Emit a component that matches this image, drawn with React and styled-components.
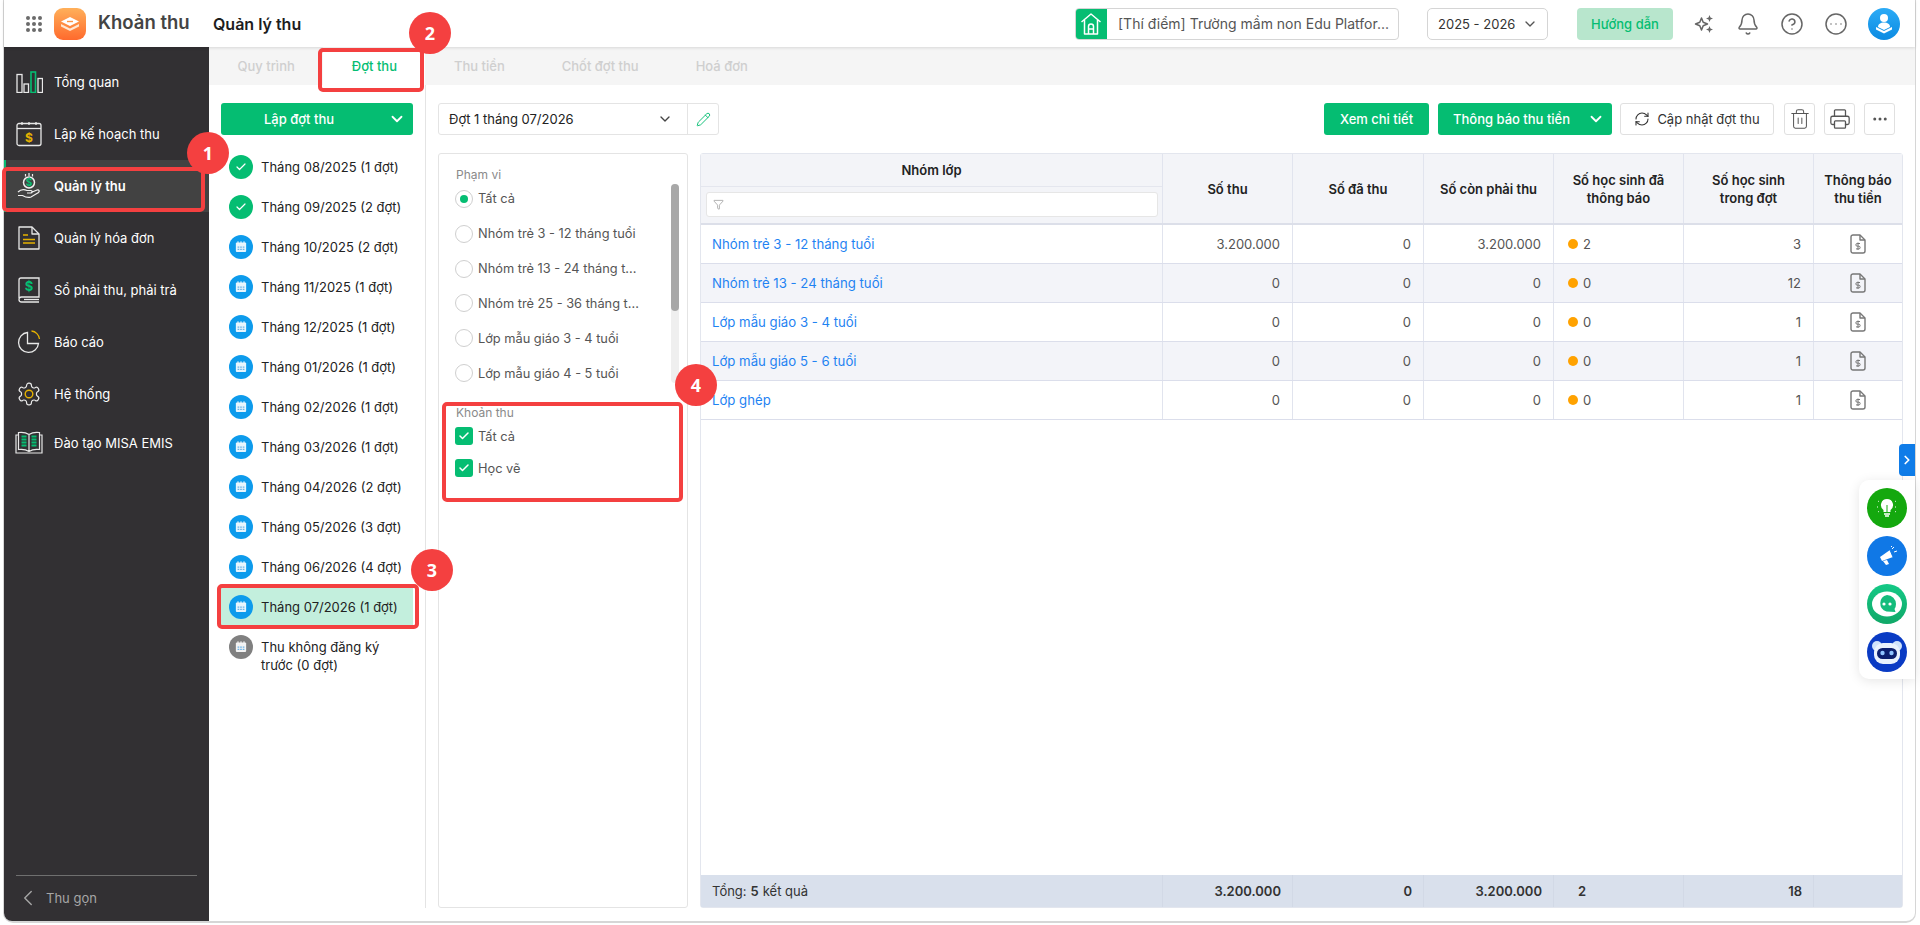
import React from "react";
import styled, { createGlobalStyle } from "styled-components";
import {
  Bell,
  Check,
  ChevronDown,
  ChevronLeft,
  ChevronRight,
  CircleEllipsis,
  CircleHelp,
  Ellipsis,
  Funnel,
  Pencil,
  Printer,
  RefreshCw,
  Trash2,
} from "lucide-react";

const GREEN = "#05bd72";
const RED = "#f44040";

const GlobalStyle = createGlobalStyle`
  html, body { margin: 0; padding: 0; background: #fff; overflow: hidden; }
  * { box-sizing: border-box; }
  body { font-family: Inter, "Noto Sans", sans-serif; font-size: 13px; color: #222; }
`;

const Frame = styled.div`
  position: relative;
  width: 1913px;
  height: 923px;
  margin-left: 3px;
  border: 1px solid #d6d6d6;
  border-width: 0 1px 2px 1px;
  border-radius: 0 0 10px 10px;
  display: flex;
  flex-direction: column;
`;

const Header = styled.header`
  height: 47px;
  flex: none;
  display: flex;
  align-items: center;
  padding: 0 15px 0 22px;
  position: relative;
  z-index: 2;
  box-shadow: 0 1px 3px rgba(0, 0, 0, 0.12);
  background: #fff;
`;

const AppGrid = styled.div`
  width: 16px;
  height: 16px;
  display: grid;
  grid-template-columns: repeat(3, 4px);
  grid-auto-rows: 4px;
  gap: 2px;
  margin-right: 12px;
  span {
    background: #6b6b6b;
    border-radius: 50%;
  }
`;

const AppTitle = styled.div`
  font-size: 18.5px;
  font-weight: 600;
  color: #444;
  margin-left: 12px;
  width: 115px;
  margin-top: -3px;
`;

const PageTitle = styled.div`
  font-size: 16px;
  font-weight: 600;
  color: #1d1d1d;
  flex: 1;
`;

const SchoolBox = styled.div`
  width: 324px;
  height: 32px;
  display: flex;
  align-items: center;
  border: 1px solid #d5d5d5;
  border-radius: 4px;
  overflow: hidden;
  margin-right: 28px;
`;

const SchoolIcon = styled.div`
  width: 32px;
  height: 32px;
  margin-left: -1px;
  background: ${GREEN};
  display: flex;
  align-items: center;
  justify-content: center;
`;

const SchoolName = styled.div`
  font-size: 14px;
  color: #555;
  margin-left: 11px;
  white-space: nowrap;
`;

const YearSelect = styled.div`
  width: 121px;
  height: 32px;
  border: 1px solid #d5d5d5;
  border-radius: 5px;
  display: flex;
  align-items: center;
  justify-content: space-between;
  padding: 0 9px 0 10px;
  font-size: 13px;
  color: #333;
  margin-right: 29px;
`;

const GuideButton = styled.div`
  width: 96px;
  height: 32px;
  background: #b8e6cd;
  border-radius: 4px;
  color: ${GREEN};
  font-weight: 500;
  display: flex;
  align-items: center;
  justify-content: center;
  margin-right: 22px;
`;

const HeaderIcons = styled.div`
  display: flex;
  align-items: center;
  gap: 22px;
  color: #666;
  svg {
    margin: 0 -1px;
  }
`;

const Avatar = styled.div`
  width: 32px;
  height: 32px;
  border-radius: 50%;
  background: linear-gradient(180deg, #2cabf6, #0c8be2);
  margin-left: 21px;
  flex: none;
  overflow: hidden;
`;

const Main = styled.div`
  flex: 1;
  min-height: 0;
  display: flex;
`;

const Sidebar = styled.nav`
  width: 205px;
  flex: none;
  background: #323033;
  display: flex;
  flex-direction: column;
  border-bottom-left-radius: 8px;
`;

const NavList = styled.div`
  flex: 1;
  padding-top: 9px;
`;

const NavItem = styled.div`
  height: ${(p) => p.$h || 52}px;
  display: flex;
  align-items: center;
  color: #fff;
  font-size: 13px;
  font-weight: ${(p) => (p.$active ? 600 : 400)};
  background: ${(p) => (p.$active ? "#424242" : "transparent")};
  box-shadow: ${(p) => (p.$active ? `inset 2px 0 0 ${GREEN}` : "none")};
`;

const NavIcon = styled.span`
  width: 50px;
  flex: none;
  display: flex;
  justify-content: center;
`;

const SidebarFoot = styled.div`
  margin: 0 12px;
  height: 46px;
  border-top: 1px solid #6f6f6f;
  display: flex;
  align-items: center;
  gap: 5px;
  padding-left: 0;
  padding-bottom: 2px;
  color: #a6a6a6;
  font-size: 13px;
  svg {
    margin-left: -1px;
  }
`;

const Content = styled.div`
  flex: 1;
  min-width: 0;
  display: flex;
  flex-direction: column;
`;

const Tabs = styled.div`
  height: 38px;
  flex: none;
  background: #f5f5f5;
  display: flex;
`;

const Tab = styled.div`
  padding: 0 28.5px;
  display: flex;
  align-items: center;
  font-weight: 500;
  font-size: 13px;
  color: ${(p) => (p.$active ? GREEN : "#cfcfcf")};
  background: ${(p) => (p.$active ? "#fff" : "transparent")};
`;

const Body = styled.div`
  flex: 1;
  min-height: 0;
  display: flex;
  padding-bottom: 13px;
`;

const ListCol = styled.div`
  width: 217px;
  flex: none;
  border-right: 1px solid #e4e4e4;
  padding: 18px 12px 0;
`;

const SplitButton = styled.div`
  height: 32px;
  background: ${GREEN};
  color: #fff;
  border-radius: 3px;
  font-weight: 500;
  display: flex;
  align-items: center;
  position: relative;
  justify-content: ${(p) => (p.$center ? "center" : "flex-start")};
  padding: ${(p) => (p.$center ? "0 36px 0 0" : "0 0 0 15px")};
  width: ${(p) => p.$w || 192}px;
  margin-left: ${(p) => p.$ml || 0}px;
  flex: none;
  svg {
    position: absolute;
    right: 7px;
    top: 7px;
  }
`;

const MonthList = styled.div`
  margin-top: 13px;
  display: flex;
  flex-direction: column;
  gap: 3px;
`;

const MonthItem = styled.div`
  min-height: 37px;
  display: flex;
  align-items: flex-start;
  gap: 8px;
  padding: 6.5px 8px;
  background: ${(p) => (p.$selected ? "#c3efdd" : "transparent")};
  font-size: 13px;
  line-height: 18px;
  color: #222;
`;

const MonthBadge = styled.span`
  width: 24px;
  height: 24px;
  border-radius: 50%;
  flex: none;
  background: ${(p) => p.$bg};
  display: flex;
  align-items: center;
  justify-content: center;
`;

const MonthLabel = styled.span`
  padding-top: 3px;
`;

const MainCol = styled.div`
  flex: 1;
  min-width: 0;
  display: flex;
  flex-direction: column;
  padding: 18px 12px 0;
`;

const Toolbar = styled.div`
  height: 32px;
  flex: none;
  display: flex;
  align-items: center;
  margin-bottom: 18px;
  padding-right: 8px;
`;

const BatchSelect = styled.div`
  width: 281px;
  height: 32px;
  border: 1px solid #e4e4e4;
  border-radius: 3px;
  display: flex;
  align-items: center;
  margin-right: auto;
`;

const BatchName = styled.div`
  flex: 1;
  padding-left: 10px;
  color: #222;
`;

const BatchCaret = styled.div`
  width: 30px;
  display: flex;
  color: #444;
`;

const BatchEdit = styled.div`
  width: 31px;
  height: 100%;
  border-left: 1px solid #e4e4e4;
  display: flex;
  align-items: center;
  justify-content: center;
  color: ${GREEN};
`;

const ActionButton = styled.div`
  height: 32px;
  width: ${(p) => p.$w}px;
  margin-left: ${(p) => p.$ml || 0}px;
  background: ${GREEN};
  color: #fff;
  border-radius: 3px;
  font-weight: 500;
  display: flex;
  align-items: center;
  justify-content: center;
`;

const OutlineButton = styled.div`
  height: 32px;
  width: ${(p) => p.$w}px;
  margin-left: ${(p) => p.$ml || 0}px;
  border: 1px solid #e0e0e0;
  border-radius: 3px;
  display: flex;
  align-items: center;
  justify-content: center;
  gap: 7px;
  color: #333;
  font-weight: 400;
  background: #fff;
`;

const Workspace = styled.div`
  flex: 1;
  min-height: 0;
  display: flex;
  gap: 12px;
`;

const FilterPanel = styled.aside`
  width: 250px;
  flex: none;
  border: 1px solid #e4e4e4;
  border-radius: 3px;
  padding-top: 12px;
`;

const SectionLabel = styled.div`
  height: 18px;
  line-height: 18px;
  font-size: 12px;
  color: #8a8a8a;
  padding-left: 17px;
  margin-top: ${(p) => p.$mt || 0}px;
`;

const ScrollArea = styled.div`
  height: 199px;
  display: flex;
  justify-content: space-between;
  padding-right: 8px;
`;

const OptionList = styled.div`
  padding: 5px 0 0 16px;
  display: flex;
  flex-direction: column;
  gap: ${(p) => p.$gap}px;
`;

const Option = styled.div`
  height: ${(p) => p.$h || 20}px;
  display: flex;
  align-items: center;
  gap: 5px;
  white-space: nowrap;
  color: #555;
  font-size: 12.8px;
`;

const Radio = styled.span`
  width: 18px;
  height: 18px;
  border-radius: 50%;
  border: 1px solid #cfcfcf;
  flex: none;
  display: flex;
  align-items: center;
  justify-content: center;
  &::after {
    content: "";
    width: 8px;
    height: 8px;
    border-radius: 50%;
    background: ${(p) => (p.$on ? GREEN : "transparent")};
  }
`;

const CheckBox = styled.span`
  width: 18px;
  height: 18px;
  border-radius: 3px;
  background: ${GREEN};
  flex: none;
  display: flex;
  align-items: center;
  justify-content: center;
  color: #fff;
`;

const ScrollTrack = styled.div`
  width: 8px;
  height: 100%;
  background: #efefef;
  border-radius: 4px;
`;

const ScrollThumb = styled.div`
  height: 127px;
  background: #a8a8a8;
  border-radius: 4px;
`;

const Table = styled.section`
  flex: 1;
  min-width: 0;
  display: flex;
  flex-direction: column;
  border: 1px solid #e3e6ee;
  border-radius: 3px;
`;

const COLS = "462px 130px 131px 130px 130px 130px 88px";

const HeadRow = styled.div`
  display: grid;
  grid-template-columns: ${COLS};
  height: 71px;
  flex: none;
  background: #f3f4f8;
  border-bottom: 2px solid #dcdfe9;
`;

const HeadCell = styled.div`
  display: flex;
  align-items: center;
  justify-content: center;
  text-align: center;
  font-weight: 600;
  font-size: 13px;
  line-height: 18px;
  color: #222;
  border-right: 1px solid #e1e4ee;
  &:last-child {
    border-right: none;
  }
`;

const GroupHead = styled.div`
  display: flex;
  flex-direction: column;
  border-right: 1px solid #e1e4ee;
`;

const GroupTitle = styled.div`
  height: 33px;
  display: flex;
  align-items: center;
  justify-content: center;
  font-weight: 600;
  font-size: 13px;
  color: #222;
  border-bottom: 1px solid #e4e6ee;
`;

const FilterInput = styled.div`
  height: 25px;
  margin: 5px 4px 0 5px;
  background: #fff;
  border: 1px solid #e6e6e6;
  border-radius: 3px;
  display: flex;
  align-items: center;
  padding-left: 6px;
  color: #888;
`;

const Row = styled.div`
  display: grid;
  grid-template-columns: ${COLS};
  height: 39px;
  flex: none;
  background: ${(p) => (p.$alt ? "#f3f4f9" : "#fff")};
  border-bottom: 1px solid #dbdeeb;
`;

const Cell = styled.div`
  display: flex;
  align-items: center;
  justify-content: ${(p) => p.$justify || "flex-end"};
  padding: 0 12px 0 11px;
  color: #555;
  font-size: 13px;
  border-right: 1px solid #e1e4ee;
  gap: 5px;
  &:last-child {
    border-right: none;
  }
`;

const GroupLink = styled.span`
  color: #1f83f2;
  font-size: 13.2px;
`;

const Dot = styled.span`
  width: 10px;
  height: 10px;
  border-radius: 50%;
  background: #ffa200;
  flex: none;
  margin-left: 3px;
`;

const TableFill = styled.div`
  flex: 1;
`;

const FootRow = styled.div`
  display: grid;
  grid-template-columns: ${COLS};
  height: 32px;
  flex: none;
  background: #d9e0ec;
`;

const FootCell = styled.div`
  display: flex;
  align-items: center;
  justify-content: ${(p) => p.$justify || "flex-end"};
  padding: 0 11px;
  font-size: 13px;
  font-weight: ${(p) => (p.$plain ? 400 : 600)};
  color: #333;
  border-right: 1px solid #d2d9e6;
  b {
    font-weight: 600;
    margin: 0 4px;
  }
  &:last-child {
    border-right: none;
  }
`;

const FootCount = styled.span`
  padding-left: 13px;
`;

const NoticeTab = styled.div`
  position: absolute;
  right: 0;
  top: 444px;
  width: 16px;
  height: 32px;
  background: #0f7ce8;
  border-radius: 4px 0 0 4px;
  color: #fff;
  display: flex;
  align-items: center;
  justify-content: center;
`;

const FloatDock = styled.div`
  position: absolute;
  right: 0;
  top: 480px;
  width: 56px;
  height: 199px;
  padding: 8px 0 0 8px;
  background: #fff;
  border-radius: 10px 0 0 10px;
  box-shadow: 0 2px 12px rgba(0, 0, 0, 0.1);
  display: flex;
  flex-direction: column;
  gap: 8px;
`;

const Marker = styled.div`
  position: absolute;
  left: ${(p) => p.$x - 4}px;
  top: ${(p) => p.$y}px;
  width: ${(p) => p.$w}px;
  height: ${(p) => p.$h}px;
  border: 4px solid ${RED};
  border-radius: 5px;
  z-index: 5;
  pointer-events: none;
`;

const StepBadge = styled.div`
  position: absolute;
  left: ${(p) => p.$x - 4 - 21}px;
  top: ${(p) => p.$y - 21}px;
  width: 42px;
  height: 42px;
  border-radius: 50%;
  background: ${RED};
  color: #fff;
  font-family: "Noto Sans", sans-serif;
  font-weight: 700;
  font-size: 18px;
  display: flex;
  align-items: center;
  justify-content: center;
  z-index: 6;
`;

const GridIcon = () => (
  <AppGrid>
    {Array.from({ length: 9 }).map((_, i) => (
      <span key={i} />
    ))}
  </AppGrid>
);

const LogoIcon = () => (
  <svg width="32" height="32" viewBox="0 0 32 32">
    <defs>
      <linearGradient id="logoBg" x1="0" y1="0" x2="0" y2="1">
        <stop offset="0" stopColor="#ffb05a" />
        <stop offset="1" stopColor="#ff6a2d" />
      </linearGradient>
    </defs>
    <rect width="32" height="32" rx="9" fill="url(#logoBg)" />
    <path d="M16 9l9 4.500-9 4.500-9-4.500z" fill="#fff" />
    <path d="M7 16l9 4.500 9-4.500v2.500l-9 4.500-9-4.500z" fill="#ffe7d2" />
    <path d="M13 13.500h6" stroke="#ff9445" strokeWidth="1.400" />
  </svg>
);

const HouseIcon = () => (
  <svg width="22" height="24" viewBox="0 0 22 24" fill="none" stroke="#fff" strokeWidth="1.500" strokeLinejoin="round">
    <path d="M1.500 10L11 2l9.500 8" />
    <path d="M4.500 8v14h13V8" />
    <path d="M8.500 22v-7.500a2.500 2.500 0 0 1 5 0V22" />
    <path d="M8.500 17h5" />
  </svg>
);

const SparkIcon = () => (
  <svg width="22" height="22" viewBox="0 0 22 22" fill="#666">
    <path d="M7.500 5l1.700 4.300L13.500 11l-4.300 1.700L7.500 17l-1.700-4.300L1.500 11l4.300-1.700z" fill="none" stroke="#666" strokeWidth="1.500" strokeLinejoin="round" />
    <path d="M15.500 2l1 2.500 2.500 1-2.500 1-1 2.500-1-2.500-2.500-1 2.500-1z" />
    <path d="M15.500 13l1 2.500 2.500 1-2.500 1-1 2.500-1-2.500-2.500-1 2.500-1z" />
  </svg>
);

const AvatarIcon = () => (
  <svg width="32" height="32" viewBox="0 0 32 32">
    <circle cx="16" cy="10" r="4" fill="#fff" />
    <path d="M10 19c0-3 2.500-4.500 6-4.500s6 1.500 6 4.500l-6 3z" fill="#fff" />
    <path d="M8 19l8 4 8-4v2.500l-8 4-8-4z" fill="#fff" />
  </svg>
);

const ChartNav = () => (
  <svg width="27" height="22" viewBox="0 0 27 22" fill="none" stroke="#e8e8e8" strokeWidth="1.300">
    <rect x="1" y="3.500" width="5" height="18" />
    <rect x="8" y="13" width="4.500" height="8.500" />
    <rect x="15" y="1" width="4.500" height="20.500" stroke={GREEN} strokeWidth="1.600" />
    <rect x="22" y="7.500" width="4.500" height="14" />
  </svg>
);

const PlanNav = () => (
  <svg width="26" height="26" viewBox="0 0 26 26" fill="none" stroke="#e8e8e8" strokeWidth="1.300">
    <rect x="1" y="2.500" width="24" height="22" rx="2" />
    <path d="M1 7.500h24" />
    <path d="M6 1v3M13 1v3M20 1v3" />
    <text x="13" y="21" textAnchor="middle" fontSize="12" fontWeight="700" fill="#e5b100" stroke="none" fontFamily="Inter, sans-serif">$</text>
  </svg>
);

const CollectNav = () => (
  <svg width="24" height="28" viewBox="0 0 24 28" fill="none" stroke="#f0f0f0" strokeWidth="1.200">
    <path d="M12 1v3M8.500 2v2.500M15.500 2v2.500" />
    <circle cx="12" cy="10.500" r="5.500" strokeWidth="1.500" />
    <text x="12" y="14" textAnchor="middle" fontSize="10" fontWeight="700" fill={GREEN} stroke="none" fontFamily="Inter, sans-serif">$</text>
    <path d="M1 20c3-3 6-3 9-1.500h4c1.500 0 1.500 2.500 0 2.500h-4M14 20.500l6-2.500c2-.5 3 1 1.500 2.500L14 25c-2.500 1-6 0-8.500-1.500H1" />
  </svg>
);

const InvoiceNav = () => (
  <svg width="22" height="24" viewBox="0 0 22 24" fill="none" stroke="#e8e8e8" strokeWidth="1.300" strokeLinejoin="round">
    <path d="M1 1h13l7 7v15H1z" />
    <path d="M14 1v7h7" />
    <path d="M5 9h5M5 13.500h12M5 17h12" stroke="#e5b100" strokeWidth="1.600" />
  </svg>
);

const LedgerNav = () => (
  <svg width="22" height="26" viewBox="0 0 22 26" fill="none" stroke="#e8e8e8" strokeWidth="1.300">
    <path d="M1 21V3a2 2 0 0 1 2-2h18v19H3.500a2.500 2.500 0 0 0 0 5H21" />
    <path d="M6 22.500h15" />
    <text x="11" y="14" textAnchor="middle" fontSize="13" fontWeight="700" fill={GREEN} stroke="none" fontFamily="Inter, sans-serif">$</text>
  </svg>
);

const ReportNav = () => (
  <svg width="24" height="24" viewBox="0 0 24 24" fill="none" stroke="#e8e8e8" strokeWidth="1.300">
    <path d="M10.500 2.500A10 10 0 1 0 21.500 13.500H10.500z" />
    <path d="M14.500 1a9 9 0 0 1 8 8" stroke="#e5b100" />
  </svg>
);

const GearNav = () => (
  <svg width="26" height="26" viewBox="0 0 24 24" fill="none" stroke="#e8e8e8" strokeWidth="1.100">
    <path d="M12.220 2h-.440a2 2 0 0 0-2 2v.180a2 2 0 0 1-1 1.730l-.430.250a2 2 0 0 1-2 0l-.150-.080a2 2 0 0 0-2.730.730l-.220.380a2 2 0 0 0 .730 2.730l.150.100a2 2 0 0 1 1 1.720v.510a2 2 0 0 1-1 1.740l-.150.090a2 2 0 0 0-.730 2.730l.220.380a2 2 0 0 0 2.730.730l.150-.080a2 2 0 0 1 2 0l.430.250a2 2 0 0 1 1 1.730V20a2 2 0 0 0 2 2h.440a2 2 0 0 0 2-2v-.180a2 2 0 0 1 1-1.730l.430-.250a2 2 0 0 1 2 0l.150.080a2 2 0 0 0 2.730-.730l.220-.390a2 2 0 0 0-.730-2.730l-.150-.080a2 2 0 0 1-1-1.740v-.500a2 2 0 0 1 1-1.740l.150-.090a2 2 0 0 0 .730-2.730l-.220-.380a2 2 0 0 0-2.730-.730l-.150.080a2 2 0 0 1-2 0l-.430-.250a2 2 0 0 1-1-1.730V4a2 2 0 0 0-2-2z" />
    <circle cx="12" cy="12" r="3.500" stroke="#e5b100" strokeWidth="1.300" />
  </svg>
);

const BookNav = () => (
  <svg width="28" height="24" viewBox="0 0 28 24" fill="none" stroke="#e8e8e8" strokeWidth="1.200">
    <path d="M14 3.500C11 1.500 7 1 3.500 1.500v17c3.500-.5 7.500 0 10.500 2 3-2 7-2.500 10.500-2v-17C21 1 17 1.500 14 3.500zM14 3.500v17" />
    <path d="M3.500 4H1v18h26V4h-2.500" />
    <path d="M6.500 5.500h5M6.500 8.500h5M6.500 11.500h5M6.500 14.500h5M16.500 5.500h5M16.500 8.500h5M16.500 11.500h5M16.500 14.500h5" stroke={GREEN} strokeWidth="1.800" />
  </svg>
);

const CalendarMini = () => (
  <svg width="12" height="12" viewBox="0 0 14 14">
    <path d="M3.500 0.300v2.500M7 0.300v2.500M10.500 0.300v2.500" stroke="#fff" strokeWidth="1.100" />
    <rect x="1" y="1.800" width="12" height="11" rx="1.200" fill="#fff" opacity="0.9" />
    <path d="M3 6.500h2v1.500H3zM6 6.500h2v1.500H6zM9 6.500h2v1.500H9zM3 9h2v1.500H3zM6 9h2v1.500H6zM9 9h2v1.500H9z" fill="#6db4e8" />
  </svg>
);

const FileMoneyIcon = () => (
  <svg width="16" height="20" viewBox="0 0 16 20" fill="none" stroke="#777" strokeWidth="1.400" strokeLinejoin="round">
    <path d="M1 3a2 2 0 0 1 2-2h7l5 5v11a2 2 0 0 1-2 2H3a2 2 0 0 1-2-2z" />
    <path d="M10 1v5h5" />
    <path d="M10 9.500H7.200a1.300 1.300 0 0 0 0 2.700h1.600a1.300 1.300 0 0 1 0 2.700H6M8 8.500v7.500" strokeWidth="1" />
  </svg>
);

const BulbCircle = () => (
  <svg width="40" height="40" viewBox="0 0 40 40">
    <circle cx="20" cy="20" r="20" fill="#14a80e" />
    <path d="M20 11a6 6 0 0 0-3.500 10.900V24h7v-2.100A6 6 0 0 0 20 11z" fill="#fff" />
    <path d="M17 26h6M18 28h4" stroke="#fff" strokeWidth="1.300" />
    <path d="M20 17v7" stroke="#14a80e" strokeWidth="1" />
    <path d="M11 13l1.500 1M29 13l-1.500 1M10 19h2M28 19h2M11 24l1.500-1M29 24l-1.500-1" stroke="#fff" strokeWidth="1" strokeDasharray="1 1" />
  </svg>
);

const MegaphoneCircle = () => (
  <svg width="40" height="40" viewBox="0 0 40 40">
    <circle cx="20" cy="20" r="20" fill="#1078e6" />
    <path d="M13 21l10-7 3 7-11 4z" fill="#fff" />
    <path d="M23 14l3 7" stroke="#1078e6" strokeWidth="1" />
    <path d="M16 25l4-1 2 4-3 1z" fill="#fff" />
    <path d="M25 13l2-2M27 16l3-1M24 11l1-1" stroke="#fff" strokeWidth="1" />
  </svg>
);

const ChatCircle = () => (
  <svg width="40" height="40" viewBox="0 0 40 40">
    <defs>
      <linearGradient id="chatBg" x1="0" y1="0" x2="0" y2="1">
        <stop offset="0" stopColor="#14c986" />
        <stop offset="1" stopColor="#11a868" />
      </linearGradient>
    </defs>
    <circle cx="20" cy="20" r="20" fill="url(#chatBg)" />
    <ellipse cx="20" cy="20" rx="15" ry="12.500" fill="#fff" />
    <path d="M20 11a9 9 0 0 1 9 9 8.500 8.500 0 0 1-1.500 5l1 3-9-.500a8.500 8.500 0 0 1 .500-16.500z" fill="#14bc7c" />
    <circle cx="17" cy="20" r="1.600" fill="#fff" />
    <circle cx="23" cy="20" r="1.600" fill="#fff" />
  </svg>
);

const RobotCircle = () => (
  <svg width="40" height="40" viewBox="0 0 40 40">
    <circle cx="20" cy="20" r="20" fill="#0a3bc4" />
    <circle cx="10" cy="14" r="5" fill="#cfe3fb" />
    <circle cx="30" cy="14" r="5" fill="#cfe3fb" />
    <rect x="7" y="11" width="26" height="21" rx="9" fill="#e9f2fd" />
    <rect x="10" y="16" width="20" height="11" rx="5.500" fill="#0b1f6e" />
    <circle cx="15.500" cy="21" r="2.200" fill="#8fc4ff" />
    <circle cx="24.500" cy="21" r="2.200" fill="#8fc4ff" />
  </svg>
);

const NAV = [
  { label: "Tổng quan", icon: <ChartNav /> },
  { label: "Lập kế hoạch thu", icon: <PlanNav /> },
  { label: "Quản lý thu", icon: <CollectNav />, active: true },
  { label: "Quản lý hóa đơn", icon: <InvoiceNav /> },
  { label: "Sổ phải thu, phải trả", icon: <LedgerNav /> },
  { label: "Báo cáo", icon: <ReportNav /> },
  { label: "Hệ thống", icon: <GearNav /> },
  { label: "Đào tạo MISA EMIS", icon: <BookNav />, h: 46 },
];

const MONTHS = [
  { label: "Tháng 08/2025 (1 đợt)", done: true },
  { label: "Tháng 09/2025 (2 đợt)", done: true },
  { label: "Tháng 10/2025 (2 đợt)" },
  { label: "Tháng 11/2025 (1 đợt)" },
  { label: "Tháng 12/2025 (1 đợt)" },
  { label: "Tháng 01/2026 (1 đợt)" },
  { label: "Tháng 02/2026 (1 đợt)" },
  { label: "Tháng 03/2026 (1 đợt)" },
  { label: "Tháng 04/2026 (2 đợt)" },
  { label: "Tháng 05/2026 (3 đợt)" },
  { label: "Tháng 06/2026 (4 đợt)" },
  { label: "Tháng 07/2026 (1 đợt)", selected: true },
  { label: "Thu không đăng ký trước (0 đợt)", gray: true },
];

const SCOPES = [
  "Tất cả",
  "Nhóm trẻ 3 - 12 tháng tuổi",
  "Nhóm trẻ 13 - 24 tháng t...",
  "Nhóm trẻ 25 - 36 tháng t...",
  "Lớp mẫu giáo 3 - 4 tuổi",
  "Lớp mẫu giáo 4 - 5 tuổi",
];

const ROWS = [
  { name: "Nhóm trẻ 3 - 12 tháng tuổi", total: "3.200.000", paid: "0", left: "3.200.000", sent: "2", count: "3" },
  { name: "Nhóm trẻ 13 - 24 tháng tuổi", total: "0", paid: "0", left: "0", sent: "0", count: "12" },
  { name: "Lớp mẫu giáo 3 - 4 tuổi", total: "0", paid: "0", left: "0", sent: "0", count: "1" },
  { name: "Lớp mẫu giáo 5 - 6 tuổi", total: "0", paid: "0", left: "0", sent: "0", count: "1" },
  { name: "Lớp ghép", total: "0", paid: "0", left: "0", sent: "0", count: "1" },
];

export default function App() {
  return (
    <>
      <GlobalStyle />
      <Frame>
        <Header>
          <GridIcon />
          <LogoIcon />
          <AppTitle>Khoản thu</AppTitle>
          <PageTitle>Quản lý thu</PageTitle>
          <SchoolBox>
            <SchoolIcon>
              <HouseIcon />
            </SchoolIcon>
            <SchoolName>[Thí điểm] Trường mầm non Edu Platfor...</SchoolName>
          </SchoolBox>
          <YearSelect>
            2025 - 2026
            <ChevronDown size={16} color="#555" />
          </YearSelect>
          <GuideButton>Hướng dẫn</GuideButton>
          <HeaderIcons>
            <SparkIcon />
            <Bell size={24} strokeWidth={1.5} />
            <CircleHelp size={24} strokeWidth={1.5} />
            <CircleEllipsis size={24} strokeWidth={1.5} />
          </HeaderIcons>
          <Avatar>
            <AvatarIcon />
          </Avatar>
        </Header>

        <Main>
          <Sidebar>
            <NavList>
              {NAV.map((item) => (
                <NavItem key={item.label} $active={item.active} $h={item.h}>
                  <NavIcon>{item.icon}</NavIcon>
                  {item.label}
                </NavItem>
              ))}
            </NavList>
            <SidebarFoot>
              <ChevronLeft size={26} strokeWidth={1.3} />
              Thu gọn
            </SidebarFoot>
          </Sidebar>

          <Content>
            <Tabs>
              <Tab>Quy trình</Tab>
              <Tab $active>Đợt thu</Tab>
              <Tab>Thu tiền</Tab>
              <Tab>Chốt đợt thu</Tab>
              <Tab>Hoá đơn</Tab>
            </Tabs>

            <Body>
              <ListCol>
                <SplitButton $center>
                  Lập đợt thu
                  <ChevronDown size={18} strokeWidth={2.4} />
                </SplitButton>
                <MonthList>
                  {MONTHS.map((m) => (
                    <MonthItem key={m.label} $selected={m.selected}>
                      <MonthBadge $bg={m.done ? GREEN : m.gray ? "#808080" : "#0d9bec"}>
                        {m.done ? <Check size={12} color="#fff" strokeWidth={2.4} /> : <CalendarMini />}
                      </MonthBadge>
                      <MonthLabel>{m.label}</MonthLabel>
                    </MonthItem>
                  ))}
                </MonthList>
              </ListCol>

              <MainCol>
                <Toolbar>
                  <BatchSelect>
                    <BatchName>Đợt 1 tháng 07/2026</BatchName>
                    <BatchCaret>
                      <ChevronDown size={16} />
                    </BatchCaret>
                    <BatchEdit>
                      <Pencil size={15} strokeWidth={1.5} />
                    </BatchEdit>
                  </BatchSelect>
                  <ActionButton $w={105}>Xem chi tiết</ActionButton>
                  <SplitButton $w={174} $ml={9}>
                    Thông báo thu tiền
                    <ChevronDown size={18} strokeWidth={2.4} />
                  </SplitButton>
                  <OutlineButton $w={154} $ml={8}>
                    <RefreshCw size={16} strokeWidth={1.6} />
                    Cập nhật đợt thu
                  </OutlineButton>
                  <OutlineButton $w={31} $ml={10}>
                    <Trash2 size={22} strokeWidth={1.1} color="#555" />
                  </OutlineButton>
                  <OutlineButton $w={31} $ml={9}>
                    <Printer size={22} strokeWidth={1.4} color="#555" />
                  </OutlineButton>
                  <OutlineButton $w={31} $ml={9}>
                    <Ellipsis size={18} color="#555" />
                  </OutlineButton>
                </Toolbar>

                <Workspace>
                  <FilterPanel>
                    <SectionLabel>Phạm vi</SectionLabel>
                    <ScrollArea>
                      <OptionList $gap={15}>
                        {SCOPES.map((s, i) => (
                          <Option key={s}>
                            <Radio $on={i === 0} />
                            {s}
                          </Option>
                        ))}
                      </OptionList>
                      <ScrollTrack>
                        <ScrollThumb />
                      </ScrollTrack>
                    </ScrollArea>
                    <SectionLabel $mt={21}>Khoản thu</SectionLabel>
                    <OptionList $gap={14}>
                      <Option $h={18}>
                        <CheckBox>
                          <Check size={12} strokeWidth={3} />
                        </CheckBox>
                        Tất cả
                      </Option>
                      <Option $h={18}>
                        <CheckBox>
                          <Check size={12} strokeWidth={3} />
                        </CheckBox>
                        Học vẽ
                      </Option>
                    </OptionList>
                  </FilterPanel>

                  <Table>
                    <HeadRow>
                      <GroupHead>
                        <GroupTitle>Nhóm lớp</GroupTitle>
                        <FilterInput>
                          <Funnel size={11} strokeWidth={1.4} />
                        </FilterInput>
                      </GroupHead>
                      <HeadCell>Số thu</HeadCell>
                      <HeadCell>Số đã thu</HeadCell>
                      <HeadCell>Số còn phải thu</HeadCell>
                      <HeadCell>
                        Số học sinh đã
                        <br />
                        thông báo
                      </HeadCell>
                      <HeadCell>
                        Số học sinh
                        <br />
                        trong đợt
                      </HeadCell>
                      <HeadCell>
                        Thông báo
                        <br />
                        thu tiền
                      </HeadCell>
                    </HeadRow>
                    {ROWS.map((r, i) => (
                      <Row key={r.name} $alt={i % 2 === 1}>
                        <Cell $justify="flex-start">
                          <GroupLink>{r.name}</GroupLink>
                        </Cell>
                        <Cell>{r.total}</Cell>
                        <Cell>{r.paid}</Cell>
                        <Cell>{r.left}</Cell>
                        <Cell $justify="flex-start">
                          <Dot />
                          {r.sent}
                        </Cell>
                        <Cell>{r.count}</Cell>
                        <Cell $justify="center">
                          <FileMoneyIcon />
                        </Cell>
                      </Row>
                    ))}
                    <TableFill />
                    <FootRow>
                      <FootCell $justify="flex-start" $plain>
                        Tổng: <b>5</b> kết quả
                      </FootCell>
                      <FootCell>3.200.000</FootCell>
                      <FootCell>0</FootCell>
                      <FootCell>3.200.000</FootCell>
                      <FootCell $justify="flex-start">
                        <FootCount>2</FootCount>
                      </FootCell>
                      <FootCell>18</FootCell>
                      <FootCell />
                    </FootRow>
                  </Table>
                </Workspace>
              </MainCol>
            </Body>
          </Content>
        </Main>

        <NoticeTab>
          <ChevronRight size={14} strokeWidth={3} />
        </NoticeTab>
        <FloatDock>
          <BulbCircle />
          <MegaphoneCircle />
          <ChatCircle />
          <RobotCircle />
        </FloatDock>

        <Marker $x={2} $y={167} $w={203} $h={45} />
        <Marker $x={318} $y={48} $w={106} $h={44} />
        <Marker $x={217} $y={584} $w={202} $h={45} />
        <Marker $x={442} $y={402} $w={241} $h={100} />
        <StepBadge $x={208} $y={153}>1</StepBadge>
        <StepBadge $x={430} $y={33}>2</StepBadge>
        <StepBadge $x={432} $y={570}>3</StepBadge>
        <StepBadge $x={696} $y={385}>4</StepBadge>
      </Frame>
    </>
  );
}
